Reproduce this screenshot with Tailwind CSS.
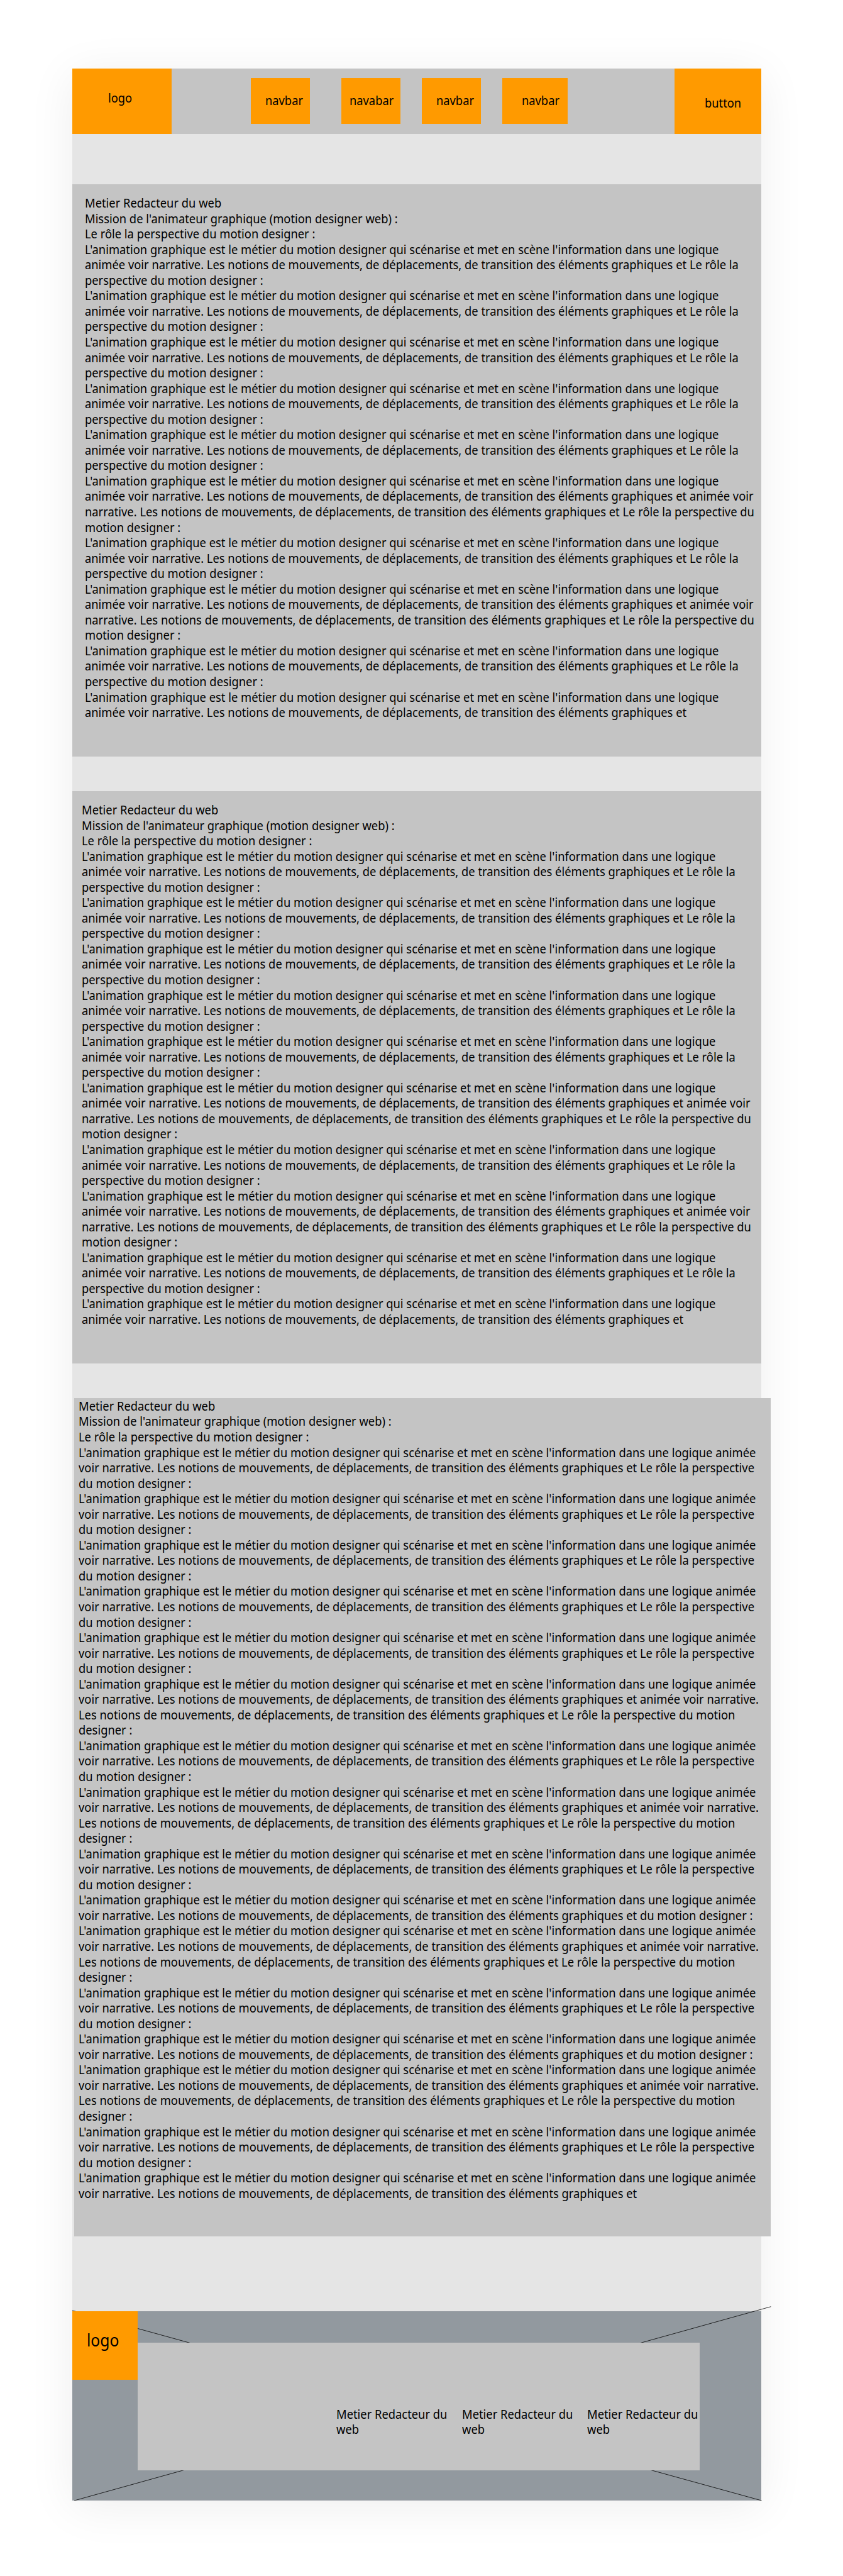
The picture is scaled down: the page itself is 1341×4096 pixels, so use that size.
<!DOCTYPE html>
<html lang="fr">
<head>
<meta charset="utf-8">
<title>Metier Redacteur du web</title>
<script src="https://cdn.jsdelivr.net/npm/@tailwindcss/browser@4"></script>
</head>
<body class="h-[4096px] w-[1341px] overflow-hidden bg-white pt-[108.6px] pl-[114.8px] font-['Noto_Sans',sans-serif] text-[20px] leading-[24.55px] text-black">
<div class="relative flex h-[3867.6px] w-[1096.5px] flex-col bg-[#e5e5e5] shadow-[0_10px_70px_rgba(0,0,0,0.07)]">

  <header class="flex h-[104.5px] shrink-0 bg-[#c4c4c4]">
    <div class="w-[158.3px] bg-[#ff9a00] pt-[35.9px] pl-[57.4px]"><span class="inline-block origin-left scale-x-[0.915]">logo</span></div>
    <nav class="mt-[15.8px] ml-[126.2px] flex h-[72.2px]">
      <a class="w-[94.1px] bg-[#ff9a00] pt-[23.7px] pl-[22.4px]"><span class="inline-block origin-left scale-x-[0.915]">navbar</span></a>
      <a class="ml-[49.3px] w-[94.1px] bg-[#ff9a00] pt-[23.7px] pl-[12.9px]"><span class="inline-block origin-left scale-x-[0.915]">navabar</span></a>
      <a class="ml-[34.1px] w-[94.5px] bg-[#ff9a00] pt-[23.7px] pl-[22.8px]"><span class="inline-block origin-left scale-x-[0.915]">navbar</span></a>
      <a class="ml-[34px] w-[104.1px] bg-[#ff9a00] pt-[23.7px] pl-[30.5px]"><span class="inline-block origin-left scale-x-[0.915]">navbar</span></a>
    </nav>
    <a class="ml-auto w-[138px] bg-[#ff9a00] pt-[43px] pl-[48px]"><span class="inline-block origin-left scale-x-[0.915]">button</span></a>
  </header>

  <section class="mt-[79.9px] h-[909.8px] shrink-0 bg-[#c4c4c4] pt-[18.1px] pl-[20.4px]">
    <p data-layout="narrow" class="origin-left scale-x-[0.917] whitespace-pre"></p>
  </section>

  <section class="mt-[55.5px] h-[909.6px] shrink-0 bg-[#c4c4c4] pt-[17.7px] pl-[15.1px]">
    <p data-layout="narrow" class="origin-left scale-x-[0.917] whitespace-pre"></p>
  </section>

  <section class="mt-[55.5px] ml-[3.4px] h-[1332.4px] w-[1107.9px] shrink-0 bg-[#c4c4c4] pt-[0.5px] pl-[7.1px]">
    <p data-layout="wide" class="origin-left scale-x-[0.917] whitespace-pre"></p>
  </section>

  <footer class="relative mt-[119.3px] flex h-[301.1px] shrink-0 bg-[#92999f]">
    <svg class="absolute top-[-10px] left-0 h-[312px] w-[1112px] overflow-visible" viewBox="0 0 1112 312" fill="none" stroke="#000" stroke-width="0.8">
      <path d="M0 8.8 L1096.5 311.1M3.2 311.1 L1111.3 2.7"/>
    </svg>
    <div class="relative h-[109.1px] w-[104.7px] bg-[#ff9a00] pt-[29.2px] pl-[23.2px] text-[27px] leading-[33px]"><span class="inline-block origin-left scale-x-[0.915]">logo</span></div>
    <div class="relative mt-[49.7px] flex h-[203.4px] w-[893.7px] bg-[#c4c4c4] pt-[101.9px] pl-[316px]">
      <div class="w-[199.2px] shrink-0"><p class="origin-left scale-x-[0.917] whitespace-nowrap">Metier Redacteur du<br>web</p></div>
      <div class="w-[199.2px] shrink-0"><p class="origin-left scale-x-[0.917] whitespace-nowrap">Metier Redacteur du<br>web</p></div>
      <div class="w-[178px] shrink-0"><p class="origin-left scale-x-[0.917] whitespace-nowrap">Metier Redacteur du<br>web</p></div>
    </div>
  </footer>
</div>

<script>
const intro = ["Metier Redacteur du web", "Mission de l'animateur graphique (motion designer web) :", "Le rôle la perspective du motion designer :"];
const lead = "L'animation graphique est le métier du motion designer qui scénarise et met en scène l'information dans une logique";
const notions = "Les notions de mouvements, de déplacements, de transition des éléments graphiques et";

// Line blocks for each column width: n = normal, l = long, s = short, e = ending
const narrow = {
  n: [lead, "animée voir narrative. " + notions + " Le rôle la", "perspective du motion designer :"],
  l: [lead, "animée voir narrative. " + notions + " animée voir", "narrative. " + notions + " Le rôle la perspective du", "motion designer :"],
  e: [lead, "animée voir narrative. " + notions]
};
const wide = {
  n: [lead + " animée", "voir narrative. " + notions + " Le rôle la perspective", "du motion designer :"],
  l: [lead + " animée", "voir narrative. " + notions + " animée voir narrative.", notions + " Le rôle la perspective du motion", "designer :"],
  s: [lead + " animée", "voir narrative. " + notions + " du motion designer :"],
  e: [lead + " animée", "voir narrative. " + notions]
};
const compose = (blocks, order) => [...intro, ...[...order].flatMap(k => blocks[k])].join("\n");
const texts = { narrow: compose(narrow, "nnnnnlnlne"), wide: compose(wide, "nnnnnlnlnslnslne") };
document.querySelectorAll("[data-layout]").forEach(p => { p.textContent = texts[p.dataset.layout]; });
</script>
</body>
</html>
